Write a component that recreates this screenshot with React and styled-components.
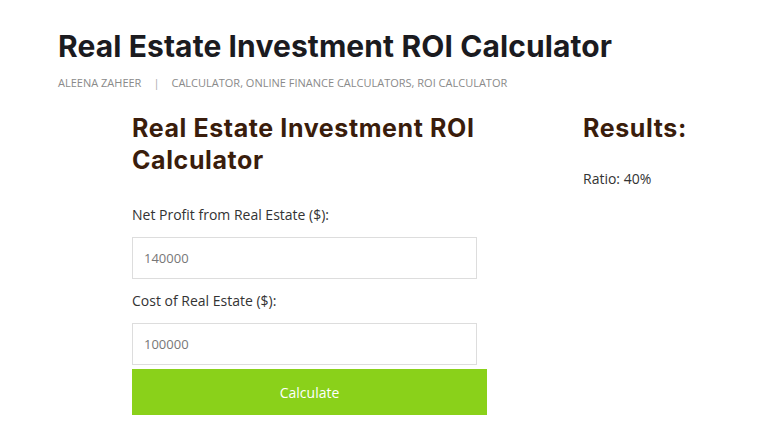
import styled, { createGlobalStyle } from "styled-components"

const Global = createGlobalStyle`
  body {
    margin: 0;
    background: #fff;
    font-family: "Open Sans", sans-serif;
  }
`

const Page = styled.div`
  padding: 28px 0 0 58px;
`

const PageTitle = styled.h1`
  margin: 0;
  font-family: "Inter", sans-serif;
  font-weight: 700;
  font-size: 30px;
  line-height: 36px;
  color: #1b1b1f;
  letter-spacing: 0.1px;
`

const Meta = styled.div`
  margin-top: 11px;
  display: flex;
  gap: 12px;
  font-size: 11px;
  color: #8a8a8a;
  text-transform: uppercase;
`

const Sep = styled.span`
  color: #aaa;
`

const Body = styled.div`
  display: flex;
  gap: 96px;
  margin: 22px 0 0 74px;
`

const Form = styled.div`
  width: 355px;
  display: flex;
  flex-direction: column;
`

const Heading = styled.h2`
  margin: 0;
  font-family: "Inter", sans-serif;
  font-weight: 700;
  font-size: 25px;
  line-height: 32px;
  color: #3a1d0c;
  letter-spacing: 0.6px;
  width: ${p => p.$width || "auto"};
`

const Label = styled.label`
  font-size: 14px;
  color: #333;
  margin-top: ${p => p.$first ? "29px" : "12px"};
  margin-bottom: 13px;
`

const Input = styled.input`
  box-sizing: border-box;
  width: 345px;
  height: 42px;
  border: 1px solid #ddd;
  padding: 0 11px;
  font-family: "Open Sans", sans-serif;
  font-size: 13px;
  color: #777;
  outline: none;
`

const Button = styled.button`
  margin-top: 4px;
  width: 355px;
  height: 46px;
  border: none;
  background: #8ad11a;
  color: #fff;
  font-family: "Open Sans", sans-serif;
  font-size: 14px;
  cursor: pointer;
`

const Results = styled.div`
  display: flex;
  flex-direction: column;
`

const Ratio = styled.div`
  margin-top: 25px;
  font-size: 14px;
  color: #333;
`

export default function App() {
  return (
    <>
      <Global />
      <Page>
        <PageTitle>Real Estate Investment ROI Calculator</PageTitle>
        <Meta>
          <span>Aleena Zaheer</span>
          <Sep>|</Sep>
          <span>Calculator, Online Finance Calculators, ROI Calculator</span>
        </Meta>
        <Body>
          <Form>
            <Heading $width="360px">Real Estate Investment ROI Calculator</Heading>
            <Label $first>Net Profit from Real Estate ($):</Label>
            <Input defaultValue="140000" />
            <Label>Cost of Real Estate ($):</Label>
            <Input defaultValue="100000" />
            <Button>Calculate</Button>
          </Form>
          <Results>
            <Heading>Results:</Heading>
            <Ratio>Ratio: 40%</Ratio>
          </Results>
        </Body>
      </Page>
    </>
  )
}
